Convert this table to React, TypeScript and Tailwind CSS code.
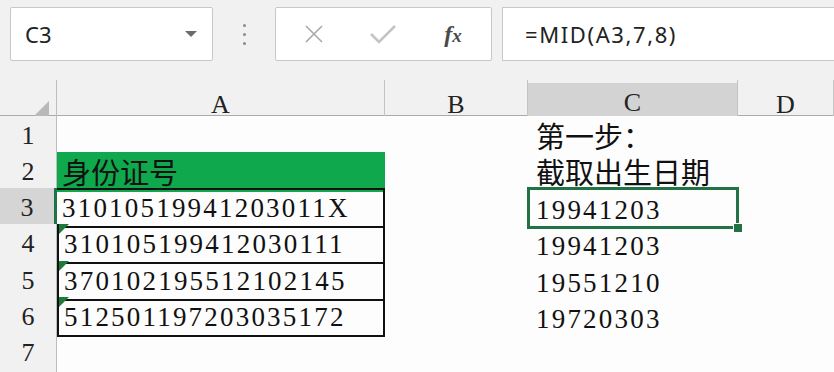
import { ReactNode } from "react";

type Row = {
  n: number;
  h: string;
  a?: string;
  c?: string;
  green?: boolean;
  boxed?: boolean;
  tri?: boolean;
  selected?: boolean;
};

const rows: Row[] = [
  { n: 1, h: "h-[36px]", c: "第一步：" },
  { n: 2, h: "h-[36px]", a: "身份证号", c: "截取出生日期", green: true },
  { n: 3, h: "h-[36px]", a: "31010519941203011X", c: "19941203", boxed: true, selected: true },
  { n: 4, h: "h-[37px]", a: "310105199412030111", c: "19941203", boxed: true, tri: true },
  { n: 5, h: "h-[36px]", a: "370102195512102145", c: "19551210", boxed: true, tri: true },
  { n: 6, h: "h-[36px]", a: "512501197203035172", c: "19720303", boxed: true, tri: true },
  { n: 7, h: "h-[36px]" },
];

const cjk = "font-['Noto_Sans_CJK_SC',sans-serif]";
const serif = "font-['Liberation_Serif',serif]";

function CellText({ text }: { text?: string }) {
  if (!text) return null;
  const isCjk = /[^\x00-\x7f]/.test(text);
  return (
    <span
      className={
        isCjk
          ? `${cjk} mb-[2px] text-[29px] leading-none text-[#111]`
          : `${serif} text-[27px] leading-none tracking-[2.2px] text-[#111]`
      }
    >
      {text}
    </span>
  );
}

function HeaderCell({ children, active }: { children: ReactNode; active?: boolean }) {
  return (
    <div className="flex h-full items-end border-r border-[#c4c4c4] pt-[3px]">
      <div
        className={`flex h-full w-full items-center justify-center ${serif} text-[26px] text-[#222] ${
          active ? "border-b-[3px] border-[#217346] bg-[#d3d3d3]" : ""
        }`}
      >
        {children}
      </div>
    </div>
  );
}

export default function App() {
  return (
    <div className="flex h-[372px] w-[834px] flex-col overflow-hidden bg-[#f1f1f1]">
      {/* formula bar */}
      <div className="flex h-[80px] shrink-0 items-start pl-[10px] pt-[7px]">
        <div className="flex h-[54px] w-[203px] items-center justify-between rounded-[2px] border border-[#c8c8c8] bg-white pl-[14px] pr-[14px]">
          <span className="font-['Noto_Sans',sans-serif] text-[22px] text-[#222]">C3</span>
          <svg width="14" height="8" viewBox="0 0 14 8">
            <path d="M1 1h12L7 7z" fill="#6b6b6b" />
          </svg>
        </div>
        <div className="flex h-[54px] w-[62px] flex-col items-center justify-center gap-[6px]">
          <span className="h-[3px] w-[3px] rounded-full bg-[#8a8a8a]" />
          <span className="h-[3px] w-[3px] rounded-full bg-[#8a8a8a]" />
          <span className="h-[3px] w-[3px] rounded-full bg-[#8a8a8a]" />
        </div>
        <div className="flex h-[54px] w-[217px] items-center rounded-[2px] border border-[#c8c8c8] bg-white">
          <div className="flex w-[72px] justify-center pl-[4px]">
            <svg width="20" height="18" viewBox="0 0 20 18">
              <path d="M2 1l16 16M18 1L2 17" stroke="#a8a8a8" strokeWidth="1.6" fill="none" />
            </svg>
          </div>
          <div className="flex w-[70px] justify-center">
            <svg width="26" height="20" viewBox="0 0 26 20">
              <path d="M1 10l8 8L25 2" stroke="#c4c4c4" strokeWidth="2.6" fill="none" />
            </svg>
          </div>
          <div className={`flex w-[70px] justify-center ${serif} text-[24px] font-bold italic text-[#4a4a4a]`}>
            <span>
              f<span className="text-[19px]">x</span>
            </span>
          </div>
        </div>
        <div className="ml-[10px] flex h-[54px] flex-1 items-center border border-r-0 border-[#c8c8c8] bg-white pl-[22px]">
          <span className="font-['Noto_Sans',sans-serif] text-[22px] tracking-[1.6px] text-[#222]">
            =MID(A3,7,8)
          </span>
        </div>
      </div>

      {/* column headers */}
      <div className="grid h-[36px] shrink-0 grid-cols-[57px_328px_143px_210px_1fr] border-b border-[#ababab]">
        <div className="flex items-end justify-end border-r border-[#bdbdbd] pb-[6px] pr-[7px]">
          <svg width="18" height="18" viewBox="0 0 18 18">
            <path d="M18 0v18H0z" fill="#b9b9b9" />
          </svg>
        </div>
        <HeaderCell>A</HeaderCell>
        <HeaderCell>B</HeaderCell>
        <HeaderCell active>C</HeaderCell>
        <HeaderCell>D</HeaderCell>
      </div>

      {/* rows */}
      <div className="flex-1 bg-[#fdfdfd]">
        {rows.map((r) => (
          <div key={r.n} className={`grid ${r.h} grid-cols-[57px_328px_143px_210px_1fr]`}>
            <div
              className={`flex items-center justify-center border-b border-[#d0d0d0] ${serif} text-[26px] text-[#222] ${
                r.selected ? "border-r-[3px] border-r-[#217346] bg-[#d5d5d5]" : "border-r border-r-[#bdbdbd] bg-[#f1f1f1]"
              }`}
            >
              {r.n}
            </div>
            <div
              className={`relative flex items-end pb-[4px] pl-[5px] ${r.green ? "bg-[#0fa84c]" : ""} ${
                r.boxed ? "border-b-2 border-r-2 border-[#111]" : ""
              } ${r.boxed && !r.selected ? "border-l-2" : ""} ${r.n === 3 ? "border-t-2" : ""}`}
            >
              {r.tri && (
                <svg className="absolute left-0 top-0" width="10" height="10" viewBox="0 0 10 10">
                  <path d="M0 0h10L0 10z" fill="#1f7a38" />
                </svg>
              )}
              <CellText text={r.a} />
            </div>
            <div />
            <div className="relative flex items-end pb-[4px] pl-[8px]">
              {r.selected && (
                <>
                  <div className="absolute inset-[-1px] border-[3px] border-[#217346]" />
                  <div className="absolute bottom-[-5px] right-[-5px] h-[10px] w-[10px] border border-white bg-[#217346]" />
                </>
              )}
              <CellText text={r.c} />
            </div>
            <div />
          </div>
        ))}
        <div className="grid h-[4px] grid-cols-[57px_1fr]">
          <div className="border-r border-[#bdbdbd] bg-[#f1f1f1]" />
          <div />
        </div>
      </div>
    </div>
  );
}
